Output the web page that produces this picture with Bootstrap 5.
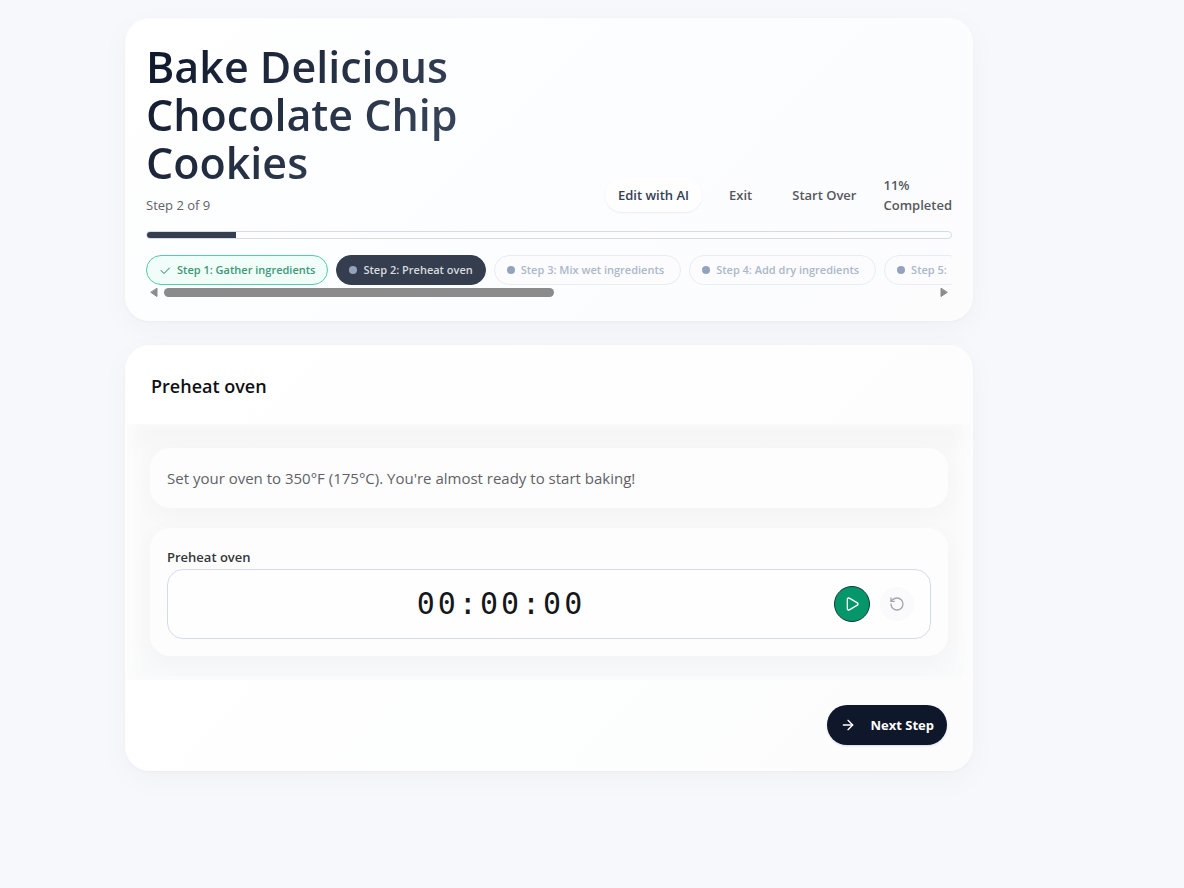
<!DOCTYPE html>
<html lang="en">
<head>
<meta charset="utf-8">
<meta name="viewport" content="width=device-width, initial-scale=1">
<title>Bake Delicious Chocolate Chip Cookies</title>
<link href="https://cdn.jsdelivr.net/npm/bootstrap@5.3.0/dist/css/bootstrap.min.css" rel="stylesheet">
<style>
  body { font-family: "Open Sans", "Noto Sans", sans-serif; font-size: 13px; line-height: 20px; color: #0f1115; background: #f7f8fc; min-height: 100vh; }
  .page { padding: 18px 86px 24px 0; }
  .guide { max-width: 848px; gap: 24px; }
  .panel { border: 1px solid #fdfdfe; border-radius: 24px; background: linear-gradient(135deg, #fff, #fcfdff 50%, #fcfcfd); box-shadow: 0 8px 32px rgba(15, 23, 42, .03), 0 1px 3px rgba(15, 23, 42, .03); }
  .overview { padding: 24px 20px 20px; }
  .heading { max-width: 400px; }
  .heading h1 { font-size: 43px; line-height: 48px; font-weight: 600; background: linear-gradient(135deg, #0f172a, #475569); -webkit-background-clip: text; background-clip: text; color: transparent; }
  .muted-text { color: #5f6268; }
  .actions { gap: 14px; font-weight: 600; color: #55585e; }
  .pill { border: 1px solid transparent; border-radius: 99px; padding: 6px 12px; font-size: 13px; line-height: 20px; font-weight: 600; color: #55585e; white-space: nowrap; background: none; }
  .pill-raised { background: #fefefe; color: #334155; box-shadow: 0 1px 2px rgba(15, 23, 42, .07); }
  .meter { height: 8px; border: 1px solid #d3dce9; border-radius: 8px; background: #fdfdfe; }
  .meter .progress-bar { background: #343e4e; }
  .chips { gap: 8px; overflow: hidden; }
  .chip { flex: none; gap: 6px; height: 30px; padding: 0 12px; border: 1px solid #e9ecf5; border-radius: 99px; font-size: 11px; font-weight: 600; color: #abb7ca; background: #fcfcfe; white-space: nowrap; }
  .chip-next { padding-right: 16px; }
  .chip-done { background: #f0fdf8; border-color: #4fcfa2; color: #3d9877; }
  .chip-done svg { color: #14805c; }
  .chip-now { background: #343e4e; border-color: #343e4e; color: #d8dbdf; }
  .dot { width: 8px; height: 8px; border-radius: 50%; background: #94a3bd; }
  .scroller { height: 15px; padding: 0 4px; gap: 6px; }
  .scroller .thumb { height: 9px; border-radius: 9px; background: #8b8b8b; }
  .step-card { overflow: hidden; }
  .step-head { padding: 28px 25px 26px; background: linear-gradient(135deg, #fff, #fdfdfd); }
  .step-head h2 { font-size: 18px; line-height: 24px; font-weight: 600; }
  .step-body { padding: 24px; gap: 20px; background: linear-gradient(180deg, #f5f5f6, #fafafa 15%, #fafafb 80%, #f8f9fa); box-shadow: inset 12px 0 16px -4px #fdfdfd, inset -12px 0 16px -4px #fdfdfd; }
  .tile { border-radius: 20px; padding: 16px; border: 1px solid #fdfdfd; background: #fdfdfd; box-shadow: 0 6px 24px rgba(15, 23, 42, .03); }
  .tile p { font-size: 15px; line-height: 26px; }
  .tile label { font-size: 13px; line-height: 24px; font-weight: 600; color: #33363b; }
  .clock { height: 70px; gap: 16px; padding: 0 16px; border: 1px solid #d3dce9; border-radius: 16px; background: #fefefe; }
  .clock output { font-family: "DejaVu Sans Mono", monospace; font-size: 30px; line-height: 36px; letter-spacing: .1em; color: #15171b; }
  .timer-buttons { gap: 10px; }
  .round { width: 36px; height: 36px; border-radius: 50%; padding: 0; border: 1px solid #0f3b35; background: #059669; color: #fff; }
  .round-soft { width: 34px; height: 34px; border-color: #fafafc; background: #fafafc; color: #a0a6af; }
  .step-foot { padding: 25px; background: linear-gradient(135deg, #fefffe, #fcfcfd); }
  .next { width: 120px; height: 40px; border: 0; border-radius: 20px; padding: 0 13px; background: #0f172a; color: #fff; font-size: 13px; font-weight: 700; box-shadow: 0 1px 2px rgba(80, 70, 160, .2); }
  svg { fill: none; stroke: currentColor; stroke-width: 2; stroke-linecap: round; stroke-linejoin: round; flex: none; }
</style>
</head>
<body>
<div class="page">
  <main class="guide mx-auto d-flex flex-column">
    <section class="panel overview">
      <header class="d-flex align-items-end justify-content-between mb-3">
        <div class="heading">
          <h1 class="mb-2">Bake Delicious Chocolate Chip Cookies</h1>
          <div class="muted-text">Step 2 of 9</div>
        </div>
        <div class="actions d-flex align-items-center">
          <button type="button" class="pill pill-raised">Edit with AI</button>
          <button type="button" class="pill">Exit</button>
          <button type="button" class="pill">Start Over</button>
          <div>11%<br>Completed</div>
        </div>
      </header>
      <div class="progress meter mb-3" role="progressbar" aria-label="Completed" aria-valuenow="11" aria-valuemin="0" aria-valuemax="100">
        <div class="progress-bar" style="width: 11.1%"></div>
      </div>
      <div class="chips d-flex">
        <button type="button" class="chip chip-done d-flex align-items-center"><svg width="12" height="12" viewBox="0 0 24 24"><path d="M21 8 10 19l-6-6"/></svg>Step 1: Gather ingredients</button>
        <button type="button" class="chip chip-now d-flex align-items-center"><span class="dot"></span>Step 2: Preheat oven</button>
        <button type="button" class="chip chip-next d-flex align-items-center"><span class="dot"></span>Step 3: Mix wet ingredients</button>
        <button type="button" class="chip chip-next d-flex align-items-center"><span class="dot"></span>Step 4: Add dry ingredients</button>
        <button type="button" class="chip chip-next d-flex align-items-center"><span class="dot"></span>Step 5:</button>
      </div>
      <div class="scroller d-flex align-items-center" aria-hidden="true">
        <svg width="8" height="9" viewBox="0 0 8 9"><path d="M7 0.500v8L1 4.500z" fill="#8b8b8b" stroke="#8b8b8b" stroke-width="1"/></svg>
        <div class="flex-grow-1"><div class="thumb" style="width: 50.6%"></div></div>
        <svg width="8" height="9" viewBox="0 0 8 9"><path d="M1 0.500v8l6-4z" fill="#8b8b8b" stroke="#8b8b8b" stroke-width="1"/></svg>
      </div>
    </section>

    <section class="panel step-card">
      <div class="step-head"><h2 class="mb-0">Preheat oven</h2></div>
      <div class="step-body d-flex flex-column">
        <div class="tile"><p class="mb-0 muted-text">Set your oven to 350°F (175°C). You're almost ready to start baking!</p></div>
        <div class="tile">
          <label class="d-block" for="timer">Preheat oven</label>
          <div class="clock d-flex align-items-center">
            <output id="timer" class="flex-grow-1 text-center">00:00:00</output>
            <div class="timer-buttons d-flex align-items-center">
              <button type="button" class="round d-flex align-items-center justify-content-center" aria-label="Start timer"><svg width="16" height="16" viewBox="0 0 24 24"><path d="M5 5a2 2 0 0 1 3.008-1.728l11.997 6.998a2 2 0 0 1 .003 3.458l-12 7A2 2 0 0 1 5 19z"/></svg></button>
              <button type="button" class="round round-soft d-flex align-items-center justify-content-center" aria-label="Reset timer"><svg width="16" height="16" viewBox="0 0 24 24"><path d="M3 12a9 9 0 1 0 9-9 9.750 9.750 0 0 0-6.740 2.740L3 8"/><path d="M3 3v5h5"/></svg></button>
            </div>
          </div>
        </div>
      </div>
      <div class="step-foot d-flex justify-content-end">
        <button type="button" class="next d-flex align-items-center justify-content-between"><svg width="16" height="16" viewBox="0 0 24 24"><path d="M5 12h14"/><path d="m12 5 7 7-7 7"/></svg>Next Step</button>
      </div>
    </section>
  </main>
</div>
<script src="https://cdn.jsdelivr.net/npm/bootstrap@5.3.0/dist/js/bootstrap.bundle.min.js"></script>
</body>
</html>
